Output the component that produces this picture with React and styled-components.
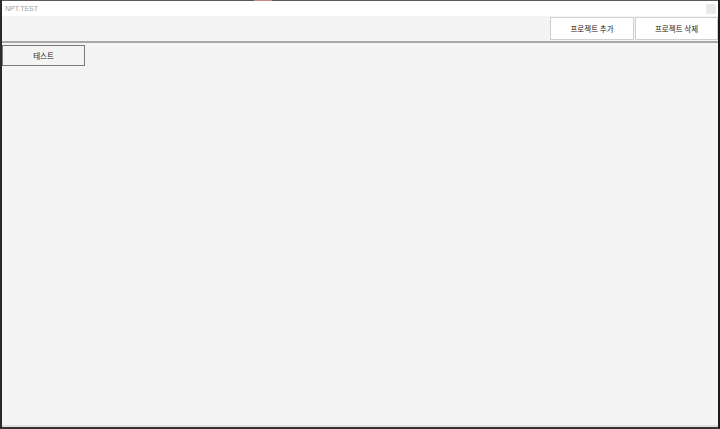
import React from "react";
import styled, { createGlobalStyle } from "styled-components";

const Global = createGlobalStyle`
  html, body { margin: 0; padding: 0; background: #f4f4f4; }
  body { font-family: "Noto Sans CJK KR", "Noto Sans", sans-serif; }
`;

const Window = styled.div`
  box-sizing: border-box;
  width: 720px;
  height: 429px;
  display: flex;
  flex-direction: column;
  background: #f4f4f4;
  border-left: 2px solid #2a2a2a;
  border-right: 2px solid #1a1a1a;
  border-bottom: 2px solid #333;
`;

const TopEdge = styled.div`
  height: 1px;
  background: linear-gradient(to right, #5a5a5a 0 252px, #c98a86 252px 270px, #5a5a5a 270px);
`;

const TitleBar = styled.div`
  height: 15px;
  background: #ffffff;
  display: flex;
  align-items: center;
  justify-content: space-between;
  padding: 0 2px 0 3px;
  font-family: "Liberation Sans", sans-serif;
  font-size: 7px;
  color: #a0a0a0;
`;

const CloseBox = styled.div`
  width: 8px;
  height: 8px;
  background: #e8e8e8;
  border: 1px solid #ececec;
`;

const Toolbar = styled.div`
  height: 24px;
  display: flex;
  justify-content: flex-end;
  align-items: flex-start;
  gap: 1px;
  padding-top: 1px;
  border-bottom: 2px solid #a8a8a8;
`;

const Button = styled.button`
  box-sizing: border-box;
  display: flex;
  align-items: center;
  justify-content: center;
  width: ${(p) => p.$w}px;
  height: ${(p) => p.$h}px;
  background: ${(p) => (p.$primary ? "#ffffff" : "#f4f4f4")};
  border: 1px solid ${(p) => (p.$primary ? "#cfcfcf" : "#7a7a7a")};
  font-family: "Noto Sans CJK KR", sans-serif;
  font-size: 7.5px;
  color: #222;
  padding: 0;
  margin: 0;
`;

const Content = styled.div`
  flex: 1;
  display: flex;
  align-items: flex-start;
  padding: 2px 0 0 0;
  border-bottom: 2px solid #e0e0e0;
`;

export default function App() {
  return (
    <>
      <Global />
      <Window>
        <TopEdge />
        <TitleBar>
          <span>NPT.TEST</span>
          <CloseBox />
        </TitleBar>
        <Toolbar>
          <Button $primary $w={84} $h={23}>프로젝트 추가</Button>
          <Button $primary $w={83} $h={23}>프로젝트 삭제</Button>
        </Toolbar>
        <Content>
          <Button $w={83} $h={21}>테스트</Button>
        </Content>
      </Window>
    </>
  );
}
